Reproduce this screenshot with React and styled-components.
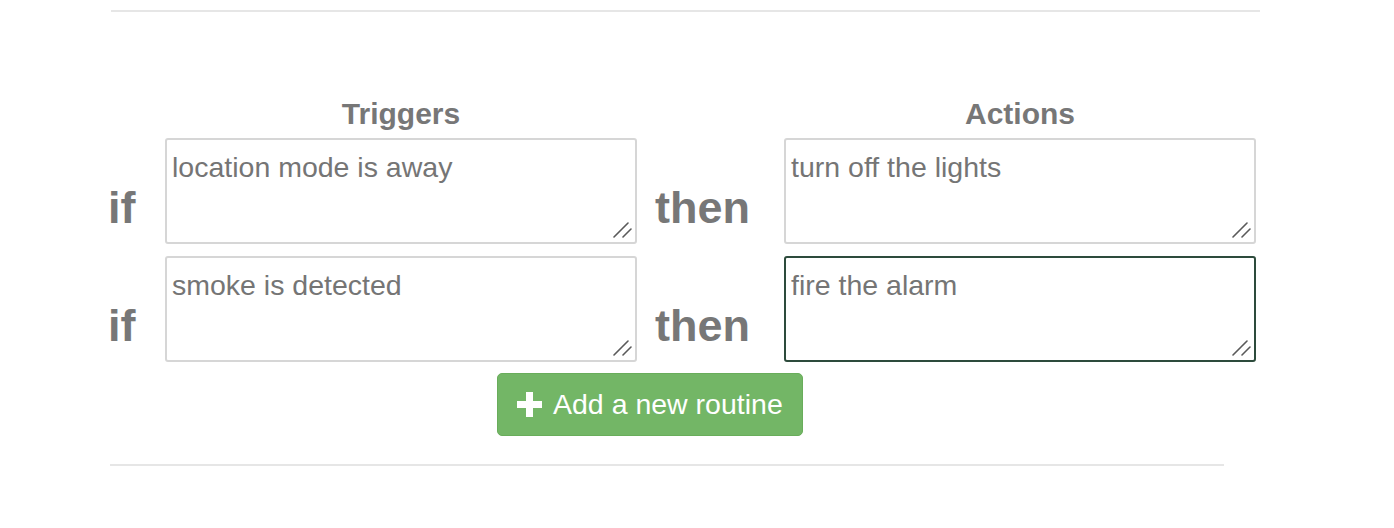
import React from "react";
import styled, { createGlobalStyle } from "styled-components";

const GlobalStyle = createGlobalStyle`
  html, body {
    margin: 0;
    padding: 0;
    background: #fff;
    font-family: "Liberation Sans", Arial, Helvetica, sans-serif;
  }
`;

const Page = styled.div`
  padding: 10px 0 0 110px;
`;

const Rule = styled.hr`
  width: ${(p) => p.$width}px;
  margin: ${(p) => p.$top || 0}px 0 0 ${(p) => p.$left || 0}px;
  border: 0;
  border-top: 2px solid #e6e6e6;
  height: 0;
`;

const Grid = styled.div`
  display: grid;
  grid-template-columns: 60px 472px 147px 472px;
  margin-left: -5px;
`;

const HeaderRow = styled(Grid)`
  margin-top: 85px;
  margin-bottom: 8px;
`;

const Heading = styled.h3`
  margin: 0;
  font-size: 30px;
  line-height: 33px;
  font-weight: 700;
  color: #777;
  text-align: center;
`;

const RoutineRow = styled(Grid)`
  margin-bottom: 12px;
  align-items: start;
`;

const Word = styled.div`
  font-size: 45px;
  line-height: 45px;
  font-weight: 700;
  color: #777;
  padding-top: 47px;
  padding-left: ${(p) => p.$indent || 0}px;
`;

const BoxWrap = styled.div`
  position: relative;
  width: 472px;
  height: 106px;
`;

const RuleBox = styled.textarea`
  box-sizing: border-box;
  width: 100%;
  height: 100%;
  margin: 0;
  padding: 10px 5px 5px;
  border: 2px solid ${(p) => (p.$active ? "#2d4b3c" : "#d6d6d6")};
  border-radius: 3px;
  font-family: "Liberation Sans", Arial, Helvetica, sans-serif;
  font-size: 28.5px;
  line-height: 1.2;
  color: #757575;
  caret-color: #666;
  background: #fff;
  outline: none;
  resize: none;
  display: block;
`;

const Grip = styled.svg`
  position: absolute;
  right: 4px;
  bottom: 6px;
  pointer-events: none;
`;

const ResizeGrip = () => (
  <Grip width="20" height="16" viewBox="0 0 20 16" aria-hidden="true">
    <path d="M1 15L15 1M10 15L18 7" stroke="#5a5a5a" strokeWidth="1.6" strokeLinecap="round" />
  </Grip>
);

const ButtonRow = styled.div`
  margin: -1px 0 0 387px;
`;

const AddButton = styled.button`
  display: inline-flex;
  align-items: center;
  gap: 11px;
  height: 63px;
  box-sizing: border-box;
  padding: 0 19px;
  border: 1px solid #69ad5b;
  border-radius: 5px;
  background: #73b666;
  color: #fff;
  font-family: "Liberation Sans", Arial, Helvetica, sans-serif;
  font-size: 28.5px;
  cursor: pointer;
`;

const PlusIcon = () => (
  <svg width="25" height="25" viewBox="0 0 25 25" aria-hidden="true">
    <path d="M9 0h7v9h9v7h-9v9H9v-9H0V9h9z" fill="#fff" />
  </svg>
);

const routines = [
  { trigger: "location mode is away", action: "turn off the lights" },
  { trigger: "smoke is detected", action: "fire the alarm", active: true },
];

const Field = ({ value, active }) => (
  <BoxWrap>
    <RuleBox
      defaultValue={value}
      $active={active}
      autoFocus={active}
      onFocus={(e) => {
        const len = e.target.value.length;
        e.target.setSelectionRange(len, len);
      }}
    />
    <ResizeGrip />
  </BoxWrap>
);

const Routine = ({ trigger, action, active }) => (
  <RoutineRow>
    <Word $indent={3}>if</Word>
    <Field value={trigger} />
    <Word $indent={18}>then</Word>
    <Field value={action} active={active} />
  </RoutineRow>
);

export default function App() {
  return (
    <Page>
      <GlobalStyle />
      <Rule $width={1149} $left={1} />
      <HeaderRow>
        <span />
        <Heading>Triggers</Heading>
        <span />
        <Heading>Actions</Heading>
      </HeaderRow>
      {routines.map((r) => (
        <Routine key={r.trigger} {...r} />
      ))}
      <ButtonRow>
        <AddButton type="button">
          <PlusIcon />
          Add a new routine
        </AddButton>
      </ButtonRow>
      <Rule $width={1114} $top={28} />
    </Page>
  );
}
